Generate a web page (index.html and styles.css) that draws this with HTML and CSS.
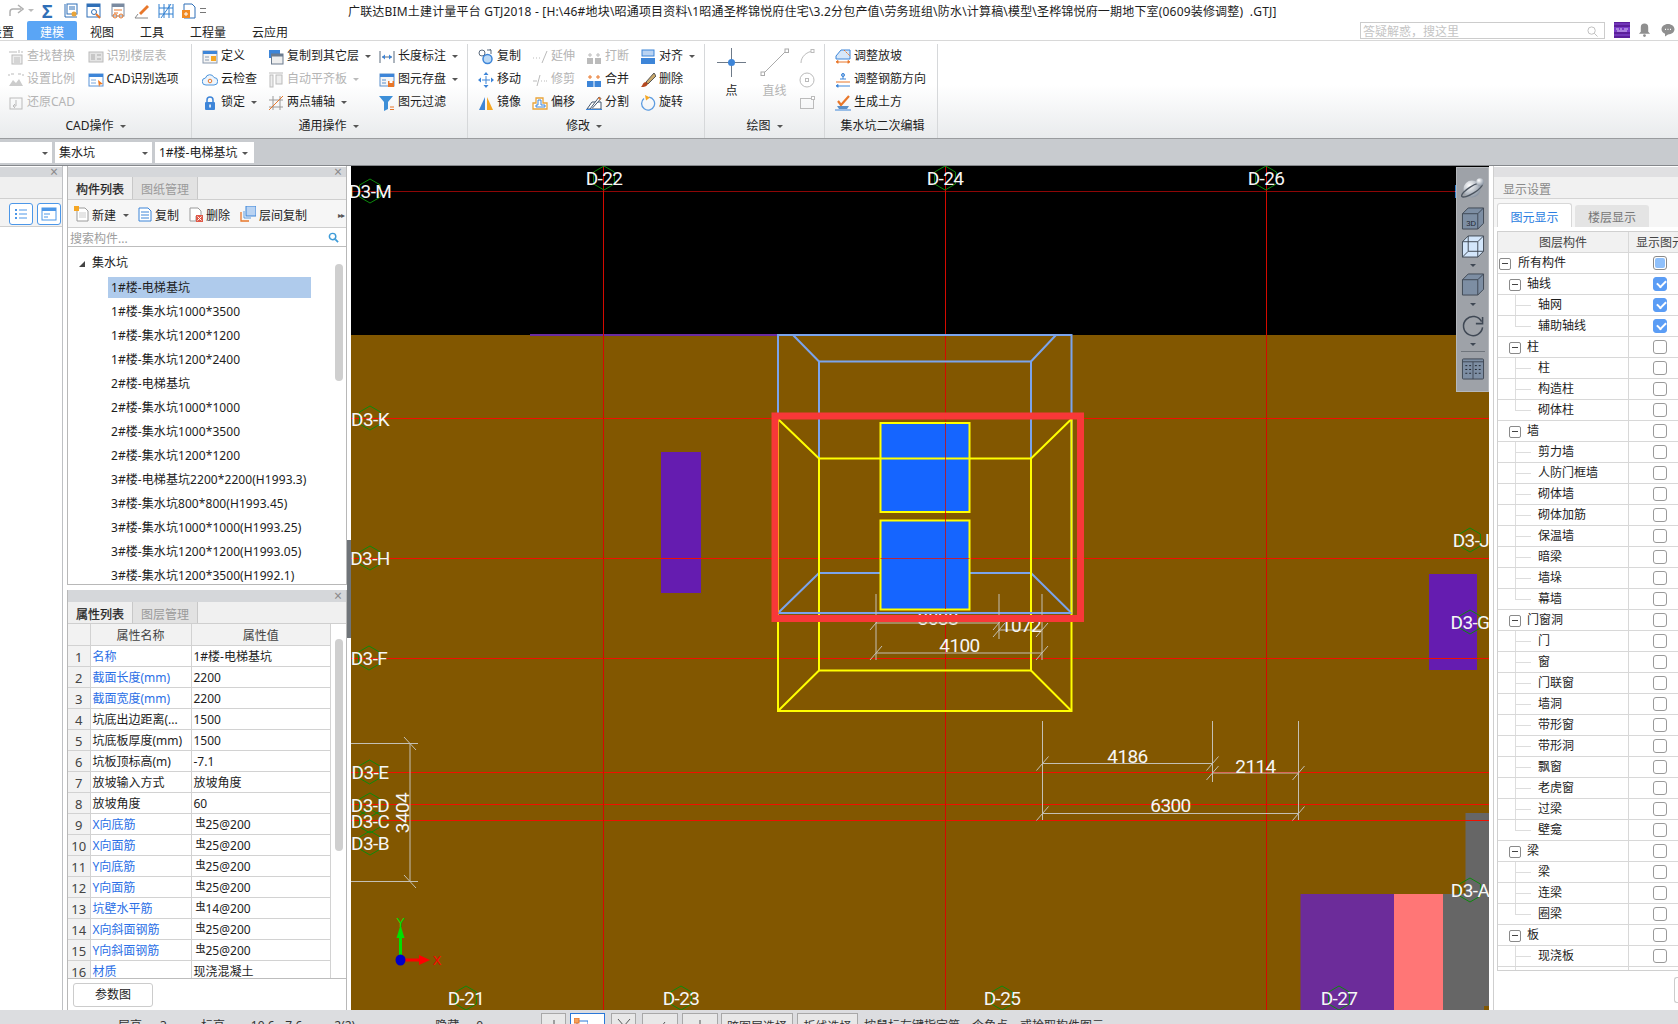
FILE: index.html
```html
<!DOCTYPE html>
<html lang="zh-CN">
<head>
<meta charset="utf-8">
<title>广联达BIM土建计量平台 GTJ2018</title>
<link rel="stylesheet" href="styles.css">
</head>
<body>
<svg class="defs" width="0" height="0">
  <defs>
    <radialGradient id="ball" cx=".35" cy=".3" r=".8"><stop offset="0" stop-color="#fff"/><stop offset="1" stop-color="#7f8b9a"/></radialGradient>
  </defs>
  <symbol id="i-find" viewBox="0 0 16 16"><path d="M1 3h8M11 1v3M13 3h2" stroke="#bbb" fill="none"/><rect x="4" y="6" width="10" height="9" fill="#eee" stroke="#bbb"/><path d="M6 9h6M6 11h6M6 13h6" stroke="#bbb"/></symbol>
  <symbol id="i-scale" viewBox="0 0 16 16"><path d="M1 2v2M15 2v2M3 2h3M10 2h3" stroke="#bbb" fill="none"/><path d="M1 14l4-6 3 3 3-4 4 7z" fill="#ccc"/></symbol>
  <symbol id="i-restore" viewBox="0 0 16 16"><rect x="2" y="3" width="12" height="11" fill="none" stroke="#bbb"/><path d="M8 5v6H5M7 9l-2 2 2 2" fill="none" stroke="#bbb"/></symbol>
  <symbol id="i-floor" viewBox="0 0 16 16"><rect x="1" y="3" width="14" height="10" fill="#e4e4e4" stroke="#bbb"/><path d="M3 6h4M3 8h4M3 10h4M9 6h4M9 10h4" stroke="#aaa"/></symbol>
  <symbol id="i-cadopt" viewBox="0 0 16 16"><rect x="1" y="2" width="14" height="12" fill="#fff" stroke="#5b94d8"/><rect x="1" y="2" width="14" height="3" fill="#3d85d8"/><path d="M10 8l5 4-3 .5-1 2.5z" fill="#f07a20"/><path d="M3 8h5M3 11h5" stroke="#7aa7dc"/></symbol>
  <symbol id="i-define" viewBox="0 0 16 16"><rect x="1" y="2" width="14" height="12" fill="#f4f4f4" stroke="#8a99ad"/><rect x="1" y="2" width="14" height="3" fill="#3d85d8"/><path d="M3 8h4M3 11h4" stroke="#8a99ad"/><rect x="9" y="7" width="5" height="5" fill="#f5a623"/></symbol>
  <symbol id="i-cloud" viewBox="0 0 16 16"><path d="M4 13a3.500 3.500 0 0 1-.5-7A4.500 4.500 0 0 1 12 5.500 3.700 3.700 0 0 1 12 13z" fill="#eef5fc" stroke="#4b94dc"/><circle cx="8" cy="9" r="1.800" fill="none" stroke="#e8772a"/></symbol>
  <symbol id="i-lock" viewBox="0 0 16 16"><path d="M5 7V5a3 3 0 0 1 6 0v2" fill="none" stroke="#3d85d8" stroke-width="1.500"/><rect x="3" y="7" width="10" height="8" rx="1" fill="#3d85d8"/><rect x="7.300" y="9.500" width="1.500" height="3" fill="#fff"/></symbol>
  <symbol id="i-copylayer" viewBox="0 0 16 16"><rect x="1" y="1" width="11" height="8" fill="#3d85d8"/><rect x="3.500" y="5" width="11.500" height="10" fill="#eee" stroke="#6b7b8e"/><rect x="3.500" y="5" width="11.500" height="2.500" fill="#6b7b8e"/></symbol>
  <symbol id="i-alignboard" viewBox="0 0 16 16"><path d="M1 1h14" stroke="#bbb"/><rect x="2" y="3" width="3" height="12" fill="#eee" stroke="#bbb"/><rect x="8" y="3" width="6" height="9" fill="#eee" stroke="#bbb"/></symbol>
  <symbol id="i-twopoint" viewBox="0 0 16 16"><path d="M5 1v14M12 1v14M1 5h14M1 12h14" stroke="#9a9a9a" fill="none"/><path d="M1 15L15 1" stroke="#e8772a"/></symbol>
  <symbol id="i-length" viewBox="0 0 16 16"><path d="M1 2v12M15 2v12M3 8h10" stroke="#5a6a7d" fill="none"/><path d="M3 8l3-2.500v5zM13 8l-3-2.500v5z" fill="#3d85d8"/></symbol>
  <symbol id="i-save" viewBox="0 0 16 16"><rect x="1" y="2" width="14" height="12" fill="#f6f6f6" stroke="#5b8fcc"/><rect x="1" y="2" width="14" height="3" fill="#3d85d8"/><path d="M3 8h4M3 11h4" stroke="#5b8fcc"/><rect x="9" y="9" width="6" height="6" fill="#e8772a"/><rect x="10.500" y="9" width="3" height="2" fill="#fff"/></symbol>
  <symbol id="i-filter" viewBox="0 0 16 16"><path d="M0 1h14L9 7v7l-4 2V7z" fill="#3d8fd8"/><path d="M11 12h4M11 14.500h4" stroke="#e8772a"/></symbol>
  <symbol id="i-copy" viewBox="0 0 16 16"><circle cx="4" cy="4" r="3" fill="#fff" stroke="#5a6a7d"/><circle cx="9.500" cy="10" r="4.500" fill="#bcd9f5" stroke="#3d85d8" stroke-width="1.500"/><path d="M9 1h4l-1.500-1M13 1v4" fill="none" stroke="#5a6a7d"/></symbol>
  <symbol id="i-move" viewBox="0 0 16 16"><path d="M8 0l2.500 3h-5zM8 16l-2.500-3h5zM0 8l3-2.500v5zM16 8l-3-2.500v5z" fill="#3d85d8"/><path d="M4 8h8M8 4v8" stroke="#3d85d8"/></symbol>
  <symbol id="i-mirror" viewBox="0 0 16 16"><path d="M7 2v13H1z" fill="#3d85d8"/><path d="M9 2v13h6z" fill="#f5a623"/></symbol>
  <symbol id="i-extend" viewBox="0 0 16 16"><path d="M1 9h1M4 9h1M7 9h1" stroke="#bbb"/><path d="M10 14l5-12" stroke="#bbb"/></symbol>
  <symbol id="i-trim" viewBox="0 0 16 16"><path d="M1 9h4M9 9h1M12 9h1M14 9h1" stroke="#bbb"/><path d="M5 14l3-11" stroke="#bbb"/></symbol>
  <symbol id="i-offset" viewBox="0 0 16 16"><path d="M1 14V8h3V3h7v5h4v6z" fill="#fff" stroke="#e8a43a" stroke-width="1.300"/><path d="M4 12V10h2V5h3v5h4v2z" fill="none" stroke="#3d85d8"/></symbol>
  <symbol id="i-break" viewBox="0 0 16 16"><rect x="1" y="9" width="6" height="6" fill="#bbb"/><rect x="9" y="9" width="6" height="6" fill="#bbb"/><path d="M2 6h4M4 4v4M10 6h4M12 4v4" stroke="#bbb"/></symbol>
  <symbol id="i-merge" viewBox="0 0 16 16"><rect x="1" y="9" width="14" height="6" fill="#3d85d8"/><path d="M8 9v6" stroke="#fff"/><path d="M2 5h4M4 3v4M10 5h4M12 3v4" stroke="#e8772a"/></symbol>
  <symbol id="i-split" viewBox="0 0 16 16"><path d="M1 14L6 7h9v7z" fill="#fff" stroke="#44566c"/><path d="M4 14L13 2l2 1.500-9 10" fill="#fff" stroke="#44566c"/><path d="M13 2l2 1.500-1 1.500-2-1.500z" fill="#e8772a"/><path d="M0 14.500h16" stroke="#3d85d8"/></symbol>
  <symbol id="i-align" viewBox="0 0 16 16"><rect x="2" y="1" width="12" height="6" fill="#b9d3f2" stroke="#3d85d8"/><rect x="1" y="9" width="14" height="6" fill="#3d85d8"/></symbol>
  <symbol id="i-delete" viewBox="0 0 16 16"><path d="M14 1L6 10l2 2 8-8z" fill="#c9a86a" stroke="#555"/><path d="M6 10c-3 0-3 3-5 5 3 0 6-.5 7-3z" fill="#b5481f"/></symbol>
  <symbol id="i-rotate" viewBox="0 0 16 16"><path d="M9 2.100A6.500 6.500 0 1 1 4 3.500" fill="none" stroke="#5b9be0" stroke-width="1.300"/><path d="M5 0l5 2.500-4 3z" fill="#f5a623"/></symbol>
  <symbol id="i-slope" viewBox="0 0 16 16"><path d="M1 7L6 1h9v9H1z" fill="#d6e7f9" stroke="#3d85d8"/><path d="M9 1l6 6" stroke="#e8772a" stroke-dasharray="2 1"/><path d="M1 13h14M1 13l2-1.500v3M15 13l-2-1.500v3" fill="#e8772a" stroke="#e8772a"/></symbol>
  <symbol id="i-rebar" viewBox="0 0 16 16"><path d="M8 1v6M5 7h6" stroke="#3d85d8"/><circle cx="8" cy="3" r="1.500" fill="none" stroke="#3d85d8"/><path d="M1 10h14" stroke="#e8772a"/><path d="M1 14h14M1 14l2-1.500v3" stroke="#3d85d8" fill="#3d85d8"/></symbol>
  <symbol id="i-earth" viewBox="0 0 16 16"><path d="M3 6l3 4 8-9" fill="none" stroke="#e8772a" stroke-width="2.200"/><path d="M2 11h12l-2 3H4z" fill="#5a8fc8"/><path d="M0 15h16" stroke="#3d85d8"/></symbol>
  <symbol id="i-new" viewBox="0 0 16 16"><path d="M3 2h8l3 3v10H3z" fill="#fff" stroke="#9a9a9a"/><path d="M5 7h7M5 9h7M5 11h7" stroke="#ccc"/><rect x="0" y="0" width="5" height="5" fill="#f5a623"/></symbol>
  <symbol id="i-dup" viewBox="0 0 16 16"><path d="M2 2h9l3 3v10H2z" fill="#fff" stroke="#3d85d8"/><path d="M4 6h8M4 9h8M4 12h8" stroke="#3d85d8"/></symbol>
  <symbol id="i-del" viewBox="0 0 16 16"><path d="M2 2h8l3 3v5H8v5H2z" fill="#fff" stroke="#9a9a9a"/><rect x="8" y="9" width="7" height="7" fill="#e05a4a"/><path d="M9.500 10.500l4 4M13.500 10.500l-4 4" stroke="#fff"/></symbol>
  <symbol id="i-floorcopy" viewBox="0 0 16 16"><path d="M1 6v9h8" fill="none" stroke="#e8772a" stroke-width="1.300"/><path d="M4 5v7h7" fill="none" stroke="#5b9be0"/><rect x="6" y="0" width="10" height="10" fill="#b9d3f2" stroke="#3d85d8"/></symbol>
</svg>

<header class="titlebar">
  <div class="quick">
    <svg class="qi redo" viewBox="0 0 16 14"><path d="M2 12V8a3 3 0 0 1 3-3h8M10 1l5 4-5 4" fill="none" stroke="#b0b0b0" stroke-width="1.500"/></svg>
    <i class="dd gray"></i>
    <span class="sigma">Σ</span>
    <svg class="qi q1" viewBox="0 0 16 16"><path d="M2 1v13h12" fill="none" stroke="#2f6fb7"/><rect x="4" y="1" width="10" height="10" fill="#fff" stroke="#2f6fb7"/><path d="M6 4h6M6 6h6" stroke="#2f6fb7"/><circle cx="11" cy="11" r="2.500" fill="#e8a43a"/></svg>
    <svg class="qi q2" viewBox="0 0 16 16"><rect x="1" y="1" width="13" height="13" fill="#fff" stroke="#2f6fb7"/><rect x="1" y="1" width="13" height="3" fill="#2f6fb7"/><circle cx="8" cy="9" r="2.500" fill="none" stroke="#2f6fb7"/><path d="M10 11l4 4" stroke="#e8772a" stroke-width="2"/></svg>
    <svg class="qi q3" viewBox="0 0 16 16"><rect x="2" y="1" width="12" height="12" fill="#fff" stroke="#7a8aa0"/><rect x="2" y="1" width="12" height="3" fill="#7a8aa0"/><path d="M4 7h8M4 10h4" stroke="#e8772a"/><circle cx="5" cy="13" r="2" fill="none" stroke="#e8772a"/><circle cx="11" cy="13" r="2" fill="none" stroke="#e8772a"/></svg>
    <svg class="qi q4" viewBox="0 0 16 16"><path d="M5 10L13 2l2 2-8 8z" fill="#e8772a"/><path d="M1 15h13M1 15l3-4" stroke="#888" fill="none"/></svg>
    <svg class="qi q5" viewBox="0 0 16 16"><path d="M1 1v14M6 1v14M11 1v14M15 1v14M1 5h14M1 11h14M3 15L13 1" stroke="#2f7fd0" fill="none"/></svg>
    <svg class="qi q6" viewBox="0 0 16 16"><path d="M3 1h8l3 3v11H3z" fill="#fff" stroke="#2f6fb7"/><rect x="1" y="7" width="8" height="8" fill="#f08a24"/><path d="M5 9v4M3 11h4" stroke="#fff"/></svg>
    <span class="qmenu"></span>
  </div>
  <div class="apptitle">广联达BIM土建计量平台 GTJ2018 - [H:\46#地块\昭通项目资料\1昭通圣桦锦悦府住宅\3.2分包产值\劳务班组\防水\计算稿\模型\圣桦锦悦府一期地下室(0609装修调整)&nbsp;&nbsp;.GTJ]</div>
</header>

<nav class="menubar">
  <span class="m m0">设置</span>
  <span class="m mactive">建模</span>
  <span class="m m1">视图</span>
  <span class="m m2">工具</span>
  <span class="m m3">工程量</span>
  <span class="m m4">云应用</span>
  <div class="searchbox">
    <span>答疑解惑，搜这里</span>
    <svg class="searchic" viewBox="0 0 12 12"><circle cx="5" cy="5" r="4" fill="none" stroke="#bbb"/><path d="M8 8l3.500 3.500" stroke="#bbb"/></svg>
  </div>
  <svg class="avatar" viewBox="0 0 16 16"><rect width="16" height="16" fill="#5b1f9a"/><rect y="5" width="16" height="5" fill="#7a3cc8"/><path d="M2 7h3M6 7h2M10 7h4M3 9h10" stroke="#d9c6f2"/><path d="M0 2h16M0 13h16" stroke="#8a4fd8"/></svg>
  <svg class="bell" viewBox="0 0 14 16"><path d="M7 1a4 4 0 0 1 4 4v5l2 2H1l2-2V5a4 4 0 0 1 4-4z" fill="#8f8f8f"/><circle cx="7" cy="14" r="1.500" fill="#8f8f8f"/></svg>
  <svg class="chat" viewBox="0 0 14 14"><path d="M7 1c3.500 0 6.500 2.300 6.500 5.300S10.500 11.500 7 11.500L4 13.500v-2.700C2 10 .5 8.300.5 6.300.5 3.300 3.500 1 7 1z" fill="#8f8f8f"/><path d="M4 6.300h1M6.500 6.300h1M9 6.300h1" stroke="#fff" stroke-width="1.300"/></svg>
</nav>

<section class="ribbon">
  <div class="group g-cad">
    <div class="cols">
      <div class="col cad1">
        <div class="cmd off"><svg class="ic"><use href="#i-find"/></svg>查找替换</div>
        <div class="cmd off"><svg class="ic"><use href="#i-scale"/></svg>设置比例</div>
        <div class="cmd off"><svg class="ic"><use href="#i-restore"/></svg>还原CAD</div>
      </div>
      <div class="col">
        <div class="cmd off"><svg class="ic"><use href="#i-floor"/></svg>识别楼层表</div>
        <div class="cmd"><svg class="ic"><use href="#i-cadopt"/></svg>CAD识别选项</div>
      </div>
    </div>
    <div class="glabel">CAD操作<i class="dd"></i></div>
  </div>
  <div class="group g-gen">
    <div class="cols">
      <div class="col gen1">
        <div class="cmd"><svg class="ic"><use href="#i-define"/></svg>定义</div>
        <div class="cmd"><svg class="ic"><use href="#i-cloud"/></svg>云检查</div>
        <div class="cmd"><svg class="ic"><use href="#i-lock"/></svg>锁定<i class="dd"></i></div>
      </div>
      <div class="col gen2">
        <div class="cmd"><svg class="ic"><use href="#i-copylayer"/></svg>复制到其它层<i class="dd"></i></div>
        <div class="cmd off"><svg class="ic"><use href="#i-alignboard"/></svg>自动平齐板<i class="dd gray"></i></div>
        <div class="cmd"><svg class="ic"><use href="#i-twopoint"/></svg>两点辅轴<i class="dd"></i></div>
      </div>
      <div class="col">
        <div class="cmd"><svg class="ic"><use href="#i-length"/></svg>长度标注<i class="dd"></i></div>
        <div class="cmd"><svg class="ic"><use href="#i-save"/></svg>图元存盘<i class="dd"></i></div>
        <div class="cmd"><svg class="ic"><use href="#i-filter"/></svg>图元过滤</div>
      </div>
    </div>
    <div class="glabel">通用操作<i class="dd"></i></div>
  </div>
  <div class="group g-mod">
    <div class="cols">
      <div class="col mod1">
        <div class="cmd"><svg class="ic"><use href="#i-copy"/></svg>复制</div>
        <div class="cmd"><svg class="ic"><use href="#i-move"/></svg>移动</div>
        <div class="cmd"><svg class="ic"><use href="#i-mirror"/></svg>镜像</div>
      </div>
      <div class="col mod1">
        <div class="cmd off"><svg class="ic"><use href="#i-extend"/></svg>延伸</div>
        <div class="cmd off"><svg class="ic"><use href="#i-trim"/></svg>修剪</div>
        <div class="cmd"><svg class="ic"><use href="#i-offset"/></svg>偏移</div>
      </div>
      <div class="col mod1">
        <div class="cmd off"><svg class="ic"><use href="#i-break"/></svg>打断</div>
        <div class="cmd"><svg class="ic"><use href="#i-merge"/></svg>合并</div>
        <div class="cmd"><svg class="ic"><use href="#i-split"/></svg>分割</div>
      </div>
      <div class="col">
        <div class="cmd"><svg class="ic"><use href="#i-align"/></svg>对齐<i class="dd"></i></div>
        <div class="cmd"><svg class="ic"><use href="#i-delete"/></svg>删除</div>
        <div class="cmd"><svg class="ic"><use href="#i-rotate"/></svg>旋转</div>
      </div>
    </div>
    <div class="glabel">修改<i class="dd"></i></div>
  </div>
  <div class="group g-draw">
    <div class="cols">
      <div class="big bigp">
        <svg class="bigic" viewBox="0 0 29 29"><path d="M14.500 0v29M0 14.500h29" stroke="#6e7a88"/><circle cx="14.500" cy="14.500" r="3.500" fill="#3d85d8"/></svg>
        <span>点</span>
      </div>
      <div class="big bigl off">
        <svg class="bigic" viewBox="0 0 29 29"><path d="M3 26L26 3" stroke="#aaa"/><rect x="1" y="24" width="3.500" height="3.500" fill="#fff" stroke="#aaa"/><rect x="25" y="1" width="3.500" height="3.500" fill="#fff" stroke="#aaa"/></svg>
        <span>直线</span>
      </div>
      <div class="col smallcol">
        <div class="cmd"><svg class="ic"><path d="M2 14C2 8 7 3 14 2" fill="none" stroke="#bbb"/><rect x="12" y="0.500" width="3" height="3" fill="#fff" stroke="#bbb"/></svg></div>
        <div class="cmd"><svg class="ic"><circle cx="8" cy="8" r="7" fill="none" stroke="#bbb"/><rect x="6.500" y="6.500" width="3" height="3" fill="#fff" stroke="#bbb"/></svg></div>
        <div class="cmd"><svg class="ic"><rect x="1.500" y="3.500" width="13" height="10" fill="none" stroke="#bbb"/><rect x="12.500" y="1.500" width="3" height="3" fill="#fff" stroke="#bbb"/></svg></div>
      </div>
    </div>
    <div class="glabel">绘图<i class="dd"></i></div>
  </div>
  <div class="group g-pit">
    <div class="cols">
      <div class="col">
        <div class="cmd"><svg class="ic"><use href="#i-slope"/></svg>调整放坡</div>
        <div class="cmd"><svg class="ic"><use href="#i-rebar"/></svg>调整钢筋方向</div>
        <div class="cmd"><svg class="ic"><use href="#i-earth"/></svg>生成土方</div>
      </div>
    </div>
    <div class="glabel">集水坑二次编辑</div>
  </div>
</section>

<div class="filterbar">
  <div class="combo c1"><i class="dd"></i></div>
  <div class="combo c2">集水坑<i class="dd"></i></div>
  <div class="combo c3">1#楼-电梯基坑<i class="dd"></i></div>
</div>

<main class="main">
  <aside class="nav">
    <div class="phead"><span class="close">×</span></div>
    <div class="navrow"></div>
    <div class="navbtns">
      <button class="vbtn"><svg viewBox="0 0 16 16"><path d="M2 3h2v2H2zM2 7h2v2H2zM2 11h2v2H2z" fill="#4c97e8"/><path d="M6 4h8M6 8h8M6 12h8" stroke="#4c97e8"/></svg></button>
      <button class="vbtn"><svg viewBox="0 0 16 16"><rect x="1" y="2" width="14" height="12" fill="none" stroke="#4c97e8"/><rect x="1" y="2" width="14" height="3" fill="#4c97e8"/><path d="M3 8h6M3 11h4" stroke="#4c97e8"/></svg></button>
    </div>
  </aside>

  <div class="leftcol">
    <section class="panel comp">
      <div class="phead"><span class="close">×</span></div>
      <div class="tabs"><span class="tab on">构件列表</span><span class="tab">图纸管理</span></div>
      <div class="ctools">
        <span class="ct t1"><svg class="ic"><use href="#i-new"/></svg>新建<i class="dd"></i></span>
        <span class="ct t2"><svg class="ic"><use href="#i-dup"/></svg>复制</span>
        <span class="ct t3"><svg class="ic"><use href="#i-del"/></svg>删除</span>
        <span class="ct t4"><svg class="ic"><use href="#i-floorcopy"/></svg>层间复制</span>
        <span class="more">▸▸</span>
      </div>
      <div class="csearch">
        <span>搜索构件...</span>
        <svg class="csic" viewBox="0 0 12 12"><circle cx="5" cy="5" r="3.500" fill="none" stroke="#3d9bd8" stroke-width="1.600"/><path d="M8 8l3 3" stroke="#3d9bd8" stroke-width="1.800"/></svg>
      </div>
      <div class="tree">
        <div class="troot"><i class="tri"></i>集水坑</div>
        <div class="ti"><span class="sel">1#楼-电梯基坑</span></div>
        <div class="ti"><span>1#楼-集水坑1000*3500</span></div>
        <div class="ti"><span>1#楼-集水坑1200*1200</span></div>
        <div class="ti"><span>1#楼-集水坑1200*2400</span></div>
        <div class="ti"><span>2#楼-电梯基坑</span></div>
        <div class="ti"><span>2#楼-集水坑1000*1000</span></div>
        <div class="ti"><span>2#楼-集水坑1000*3500</span></div>
        <div class="ti"><span>2#楼-集水坑1200*1200</span></div>
        <div class="ti"><span>3#楼-电梯基坑2200*2200(H1993.3)</span></div>
        <div class="ti"><span>3#楼-集水坑800*800(H1993.45)</span></div>
        <div class="ti"><span>3#楼-集水坑1000*1000(H1993.25)</span></div>
        <div class="ti"><span>3#楼-集水坑1200*1200(H1993.05)</span></div>
        <div class="ti"><span>3#楼-集水坑1200*3500(H1992.1)</span></div>
        <div class="thumb thumb1"></div>
      </div>
    </section>
    <section class="panel prop">
      <div class="phead"><span class="close">×</span></div>
      <div class="tabs"><span class="tab on">属性列表</span><span class="tab">图层管理</span></div>
      <div class="ptable">
        <table>
          <colgroup><col class="cn"><col class="ck"><col class="cv"></colgroup>
          <thead><tr><th></th><th>属性名称</th><th>属性值</th></tr></thead>
          <tbody>
            <tr><th>1</th><td class="lk">名称</td><td>1#楼-电梯基坑</td></tr>
            <tr><th>2</th><td class="lk">截面长度(mm)</td><td>2200</td></tr>
            <tr><th>3</th><td class="lk">截面宽度(mm)</td><td>2200</td></tr>
            <tr><th>4</th><td>坑底出边距离(...</td><td>1500</td></tr>
            <tr><th>5</th><td>坑底板厚度(mm)</td><td>1500</td></tr>
            <tr><th>6</th><td>坑板顶标高(m)</td><td>-7.1</td></tr>
            <tr><th>7</th><td>放坡输入方式</td><td>放坡角度</td></tr>
            <tr><th>8</th><td>放坡角度</td><td>60</td></tr>
            <tr><th>9</th><td class="lk">X向底筋</td><td><b class="rb">虫</b>25@200</td></tr>
            <tr><th>10</th><td class="lk">X向面筋</td><td><b class="rb">虫</b>25@200</td></tr>
            <tr><th>11</th><td class="lk">Y向底筋</td><td><b class="rb">虫</b>25@200</td></tr>
            <tr><th>12</th><td class="lk">Y向面筋</td><td><b class="rb">虫</b>25@200</td></tr>
            <tr><th>13</th><td class="lk">坑壁水平筋</td><td><b class="rb">虫</b>14@200</td></tr>
            <tr><th>14</th><td class="lk">X向斜面钢筋</td><td><b class="rb">虫</b>25@200</td></tr>
            <tr><th>15</th><td class="lk">Y向斜面钢筋</td><td><b class="rb">虫</b>25@200</td></tr>
            <tr><th>16</th><td class="lk">材质</td><td>现浇混凝土</td></tr>
          </tbody>
        </table>
        <div class="thumb thumb2"></div>
      </div>
      <div class="pfoot"><button class="parambtn">参数图</button></div>
    </section>
  </div>

  <div class="split"><div class="grip"></div></div>

  <div class="canvas">
    <svg class="draw" viewBox="351 166 1138 844" width="1138" height="844">
      <defs>
        <polygon id="hex" points="0,-12 10.400,-6 10.400,6 0,12 -10.400,6 -10.400,-6" fill="none" stroke="#0c8a0c"/>
        <path id="tick" d="M-6 7L6 -7" stroke="#c4c0b4" fill="none"/>
      </defs>
      <rect x="351" y="166" width="1138" height="844" fill="#000"/>
      <rect x="351" y="335" width="1138" height="675" fill="#825700"/>
      <path d="M530 335H778" stroke="#6a2ba0" stroke-width="2"/>
      <rect x="661" y="452" width="40" height="141" fill="#651cb0"/>
      <rect x="1429" y="574" width="48" height="96" fill="#651cb0"/>
      <rect x="1465.500" y="813" width="24" height="81" fill="#666"/>
      <rect x="1300.500" y="894" width="94" height="116" fill="#6c2c9a"/>
      <rect x="1394" y="894" width="49" height="116" fill="#ff7676"/>
      <rect x="1443" y="894" width="46" height="116" fill="#666"/>
      <rect x="1484" y="1006" width="5" height="4" fill="#825700"/>
      <g class="grid-h">
        <path d="M351 191.500H1489" stroke="#8e0606"/>
        <path d="M351 418.500H1489M351 558.500H1489M351 658.500H1489M351 772.500H1489M351 804.500H1489M351 820.500H1489" stroke="#f01000"/>
      </g>
      <path d="M603.500 166V1010M945.500 166V1010M1266.500 166V1010" stroke="#d40a00"/>
      <g class="lbl">
        <text x="938" y="618">3038</text>
      </g>
      <g class="pit">
        <g stroke="#7ba4ec" stroke-width="2" fill="none">
          <path d="M778 335H1071.500V613H778Z"/>
          <path d="M819 573V361.500H1031V573"/>
          <path d="M793 335L819 361.500M1056 335L1031 361.500M778 613L819 573H1031L1071.500 613"/>
        </g>
        <g stroke="#ffff00" stroke-width="2" fill="none">
          <path d="M778 419V711H1071.500V419"/>
          <path d="M819 458.500H1031V670.500H819Z"/>
          <path d="M778 419L819 458.500M1071.500 419L1031 458.500M778 711L819 670.500M1071.500 711L1031 670.500"/>
        </g>
        <rect x="880.500" y="423" width="89" height="89" fill="#1565ff" stroke="#ffff00" stroke-width="2"/>
        <path d="M880.500 458.500H969.500" stroke="#ffff00" stroke-width="2"/>
        <rect x="880.500" y="520.500" width="89" height="89" fill="#1565ff" stroke="#ffff00" stroke-width="2"/>
        <path d="M945.500 423V609" stroke="#d40a00" opacity=".75"/>
        <path d="M880.500 558.500H969.500" stroke="#f01000" opacity=".75"/>
        <path d="M778 613H1071.500" stroke="#7ba4ec" stroke-width="2"/>
      </g>
      <g class="dim" stroke="#c4c0b4" fill="none">
        <path d="M876 594V660M999 594V639M1042 594V660M876 623H999M999 630H1042M876 653H1042"/>
        <path d="M1042.500 721V820M1212.500 721V782M1298.500 721V820M1042.500 763.500H1212.500M1212.500 773H1298.500M1042.500 813.500H1298.500"/>
        <path d="M351 743.500H418M351 881.500H418M410 743V882"/>
      </g>
      <use href="#tick" x="876" y="623"/><use href="#tick" x="999" y="623"/><use href="#tick" x="999" y="630"/><use href="#tick" x="1042" y="630"/><use href="#tick" x="876" y="653"/><use href="#tick" x="1042" y="653"/>
      <use href="#tick" x="1042.500" y="763.500"/><use href="#tick" x="1212.500" y="763.500"/><use href="#tick" x="1212.500" y="773"/><use href="#tick" x="1298.500" y="773"/><use href="#tick" x="1042.500" y="813.500"/><use href="#tick" x="1298.500" y="813.500"/>
      <path d="M404 737L416 750M404 875L416 888" stroke="#c4c0b4"/>
      <g class="lbl">
        <text x="1021" y="625">1072</text>
        <text x="959.500" y="645">4100</text>
        <text x="1127.500" y="756">4186</text>
        <text x="1255.500" y="766">2114</text>
        <text x="1170.500" y="805">6300</text>
        <text x="402.500" y="813" transform="rotate(-90 402.500 813)">3404</text>
      </g>
      <g class="hexes">
        <use href="#hex" x="604" y="178"/><use href="#hex" x="945" y="178"/><use href="#hex" x="1266" y="178"/>
        <use href="#hex" x="466" y="998"/><use href="#hex" x="681" y="998"/><use href="#hex" x="1002" y="998"/><use href="#hex" x="1339" y="998"/>
        <use href="#hex" x="370" y="191"/><use href="#hex" x="370" y="418"/><use href="#hex" x="370" y="558"/><use href="#hex" x="369" y="658"/>
        <use href="#hex" x="369.500" y="772"/><use href="#hex" x="370" y="805"/><use href="#hex" x="370" y="821"/><use href="#hex" x="370" y="843"/>
        <use href="#hex" x="1470" y="540"/><use href="#hex" x="1470" y="622"/><use href="#hex" x="1470" y="890"/>
      </g>
      <g class="lbl">
        <text x="604" y="178">D-22</text><text x="945" y="178">D-24</text><text x="1266" y="178">D-26</text>
        <text x="466" y="998">D-21</text><text x="681" y="998">D-23</text><text x="1002" y="998">D-25</text><text x="1339" y="998">D-27</text>
        <text x="370" y="191">D3-M</text><text x="370" y="419">D3-K</text><text x="370" y="558">D3-H</text><text x="369" y="658">D3-F</text>
        <text x="370" y="772">D3-E</text><text x="370" y="805">D3-D</text><text x="370" y="821">D3-C</text><text x="370" y="843">D3-B</text>
        <text x="1471" y="540">D3-J</text><text x="1470" y="622">D3-G</text><text x="1470" y="890">D3-A</text>
        <text x="1472" y="191">D3-L</text><text x="1474" y="296">D3-I</text>
      </g>
      <rect x="775" y="416" width="305.500" height="202.500" fill="none" stroke="#f83838" stroke-width="7"/>
      <g class="axis">
        <path d="M400.500 960V936" stroke="#00e000" stroke-width="3"/>
        <path d="M400.500 925l-4 13h8z" fill="#00e000"/>
        <path d="M401 960H422" stroke="#f00" stroke-width="3"/>
        <path d="M430 960l-11-5v10z" fill="#f00"/>
        <ellipse cx="400.500" cy="960" rx="5" ry="5.500" fill="#0000c8"/>
        <text class="axy" x="400.500" y="922">Y</text>
        <text class="axx" x="437" y="960">X</text>
      </g>
    </svg>
    <div class="viewtools">
      <svg class="vt vplanet" viewBox="0 0 24 22"><circle cx="11" cy="12" r="8.500" fill="url(#ball)"/><ellipse cx="11" cy="13" rx="12" ry="3.500" fill="none" stroke="#4c5560" stroke-width="1.400" transform="rotate(-32 11 13)"/><circle cx="19" cy="5" r="3.800" fill="url(#ball)"/></svg>
      <svg class="vt v3d" viewBox="0 0 24 24"><path d="M1 7L7 1h16v16l-6 6H1z" fill="#7d8ea3" stroke="#3f4854"/><path d="M1 7h16v16M17 7l6-6" fill="none" stroke="#3f4854"/><text class="t3d" x="5" y="20">3D</text></svg>
      <svg class="vt vwire" viewBox="0 0 24 24"><path d="M1 7L7 1h16v16l-6 6H1z" fill="#d3e6fb" stroke="#3f4854"/><path d="M7 1v16h16M7 17l-6 6M1 7h16v16M17 7l6-6" fill="none" stroke="#3f4854"/></svg>
      <i class="dd dark d1"></i>
      <svg class="vt vsolid" viewBox="0 0 24 24"><path d="M1 7L7 1h16v16l-6 6H1z" fill="#7d8ea3" stroke="#3f4854"/><path d="M1 7h16v16M17 7l6-6" fill="none" stroke="#3f4854"/></svg>
      <i class="dd dark d2"></i>
      <svg class="vt vrot" viewBox="0 0 24 24"><path d="M21 7A10 10 0 1 0 22 13" fill="none" stroke="#3f4854" stroke-width="1.600"/><path d="M22 2v7h-7" fill="none" stroke="#3f4854" stroke-width="1.600"/></svg>
      <i class="dd dark d3"></i>
      <span class="vsep"></span>
      <svg class="vt vgrid" viewBox="0 0 24 24"><rect x="1" y="2" width="22" height="21" rx="1" fill="#7d8ea3" stroke="#3f4854"/><path d="M1 5h22M12 5v18" stroke="#3f4854"/><path d="M4 9h2M8 9h2M4 13h2M8 13h2M4 17h2M8 17h2M14 9h2M18 9h2M14 13h2M18 13h2M14 17h2M18 17h2" stroke="#20262e"/></svg>
    </div>
  </div>

  <aside class="right">
    <div class="phead"></div>
    <div class="rtitle">显示设置</div>
    <div class="rtabs"><span class="rtab on">图元显示</span><span class="rtab">楼层显示</span></div>
    <div class="ltable">
      <div class="lrow lhead"><span class="lname">图层构件</span><span class="lcheck">显示图元</span></div>
      <div class="lrow"><span class="lname l0"><i class="exp"></i>所有构件</span><span class="lcheck"><i class="cb part"></i></span></div>
      <div class="lrow"><span class="lname l1"><i class="exp"></i>轴线</span><span class="lcheck"><i class="cb on"></i></span></div>
      <div class="lrow"><span class="lname l2"><i class="br"></i>轴网</span><span class="lcheck"><i class="cb on"></i></span></div>
      <div class="lrow"><span class="lname l2"><i class="br last"></i>辅助轴线</span><span class="lcheck"><i class="cb on"></i></span></div>
      <div class="lrow"><span class="lname l1"><i class="exp"></i>柱</span><span class="lcheck"><i class="cb"></i></span></div>
      <div class="lrow"><span class="lname l2"><i class="br"></i>柱</span><span class="lcheck"><i class="cb"></i></span></div>
      <div class="lrow"><span class="lname l2"><i class="br"></i>构造柱</span><span class="lcheck"><i class="cb"></i></span></div>
      <div class="lrow"><span class="lname l2"><i class="br last"></i>砌体柱</span><span class="lcheck"><i class="cb"></i></span></div>
      <div class="lrow"><span class="lname l1"><i class="exp"></i>墙</span><span class="lcheck"><i class="cb"></i></span></div>
      <div class="lrow"><span class="lname l2"><i class="br"></i>剪力墙</span><span class="lcheck"><i class="cb"></i></span></div>
      <div class="lrow"><span class="lname l2"><i class="br"></i>人防门框墙</span><span class="lcheck"><i class="cb"></i></span></div>
      <div class="lrow"><span class="lname l2"><i class="br"></i>砌体墙</span><span class="lcheck"><i class="cb"></i></span></div>
      <div class="lrow"><span class="lname l2"><i class="br"></i>砌体加筋</span><span class="lcheck"><i class="cb"></i></span></div>
      <div class="lrow"><span class="lname l2"><i class="br"></i>保温墙</span><span class="lcheck"><i class="cb"></i></span></div>
      <div class="lrow"><span class="lname l2"><i class="br"></i>暗梁</span><span class="lcheck"><i class="cb"></i></span></div>
      <div class="lrow"><span class="lname l2"><i class="br"></i>墙垛</span><span class="lcheck"><i class="cb"></i></span></div>
      <div class="lrow"><span class="lname l2"><i class="br last"></i>幕墙</span><span class="lcheck"><i class="cb"></i></span></div>
      <div class="lrow"><span class="lname l1"><i class="exp"></i>门窗洞</span><span class="lcheck"><i class="cb"></i></span></div>
      <div class="lrow"><span class="lname l2"><i class="br"></i>门</span><span class="lcheck"><i class="cb"></i></span></div>
      <div class="lrow"><span class="lname l2"><i class="br"></i>窗</span><span class="lcheck"><i class="cb"></i></span></div>
      <div class="lrow"><span class="lname l2"><i class="br"></i>门联窗</span><span class="lcheck"><i class="cb"></i></span></div>
      <div class="lrow"><span class="lname l2"><i class="br"></i>墙洞</span><span class="lcheck"><i class="cb"></i></span></div>
      <div class="lrow"><span class="lname l2"><i class="br"></i>带形窗</span><span class="lcheck"><i class="cb"></i></span></div>
      <div class="lrow"><span class="lname l2"><i class="br"></i>带形洞</span><span class="lcheck"><i class="cb"></i></span></div>
      <div class="lrow"><span class="lname l2"><i class="br"></i>飘窗</span><span class="lcheck"><i class="cb"></i></span></div>
      <div class="lrow"><span class="lname l2"><i class="br"></i>老虎窗</span><span class="lcheck"><i class="cb"></i></span></div>
      <div class="lrow"><span class="lname l2"><i class="br"></i>过梁</span><span class="lcheck"><i class="cb"></i></span></div>
      <div class="lrow"><span class="lname l2"><i class="br last"></i>壁龛</span><span class="lcheck"><i class="cb"></i></span></div>
      <div class="lrow"><span class="lname l1"><i class="exp"></i>梁</span><span class="lcheck"><i class="cb"></i></span></div>
      <div class="lrow"><span class="lname l2"><i class="br"></i>梁</span><span class="lcheck"><i class="cb"></i></span></div>
      <div class="lrow"><span class="lname l2"><i class="br"></i>连梁</span><span class="lcheck"><i class="cb"></i></span></div>
      <div class="lrow"><span class="lname l2"><i class="br last"></i>圈梁</span><span class="lcheck"><i class="cb"></i></span></div>
      <div class="lrow"><span class="lname l1"><i class="exp"></i>板</span><span class="lcheck"><i class="cb"></i></span></div>
      <div class="lrow"><span class="lname l2"><i class="br"></i>现浇板</span><span class="lcheck"><i class="cb"></i></span></div>
      <div class="lrow"><span class="lname l2"><i class="br"></i></span><span class="lcheck"><i class="cb"></i></span></div>
    </div>
    <div class="rfoot"><button class="rbtn"></button></div>
  </aside>
</main>

<footer class="status">
  <span class="s s1">层高</span><span class="s s2">3</span><span class="s s3">标高</span><span class="s s4">-10.6~-7.6</span><span class="s s5">2(2)</span><span class="s s6">隐藏</span><span class="s s7">0</span>
  <span class="sb b1"><svg viewBox="0 0 14 14"><path d="M7 2v12M2 12h10" stroke="#555" fill="none"/></svg></span>
  <span class="sb b2 act"><svg viewBox="0 0 14 14"><rect x="3" y="3" width="11" height="11" fill="#fff" stroke="#2a78d8"/><rect x="0" y="0" width="5" height="5" fill="#f5a25d" stroke="#e8772a"/></svg></span>
  <span class="sb b3"><svg viewBox="0 0 14 14"><path d="M1 1l6 7 6-7M7 8v6" stroke="#555" fill="none"/></svg></span>
  <span class="sb b4"><svg viewBox="0 0 14 14"><path d="M2 10l3 3 7-9" stroke="#555" fill="none"/></svg></span>
  <span class="sb b5"><svg viewBox="0 0 14 14"><path d="M7 2v12M1 8h12" stroke="#555" fill="none"/></svg></span>
  <span class="sb b6">跨图层选择</span>
  <span class="sb b7">折线选择</span>
  <span class="s s8">按鼠标左键指定第一个角点，或拾取构件图元</span>
</footer>
</body>
</html>
```
FILE: styles.css
```css
* { box-sizing: border-box; }
html, body { margin: 0; padding: 0; }
body {
  width: 1678px;
  height: 1024px;
  overflow: hidden;
  background: #fff;
  color: #1d1d1d;
  font: 12px/1.2 "Noto Sans", "Noto Sans CJK SC", sans-serif;
}
i, b { font-style: normal; font-weight: normal; }
button { font: inherit; padding: 0; }
.defs { position: absolute; }

/* dropdown caret */
.dd {
  display: inline-block;
  width: 0;
  height: 0;
  margin-left: 6px;
  border-style: solid;
  border-width: 3px 3px 0;
  border-color: #555 transparent transparent;
  vertical-align: middle;
}
.dd.gray { border-top-color: #bbb; }
.dd.dark { border-top-color: #3f4854; margin-left: 0; flex: none; }

/* title bar */
.titlebar { display: flex; align-items: center; height: 21px; }
.quick { display: flex; align-items: center; width: 348px; height: 21px; flex: none; }
.qi { width: 16px; height: 16px; flex: none; }
.redo { margin-left: 8px; }
.quick .dd { margin-left: 4px; }
.sigma { margin-left: 8px; width: 11px; color: #2f6fb7; font-size: 18px; font-weight: 700; line-height: 18px; }
.q1 { margin-left: 10px; }
.q2, .q3, .q4, .q5 { margin-left: 8px; }
.q2 { margin-left: 7px; }
.q6 { margin-left: 7px; }
.qmenu { margin-left: 3px; width: 6px; height: 5px; border-top: 1px solid #777; border-bottom: 1px solid #777; }
.apptitle { padding-top: 1px; white-space: nowrap; line-height: 21px; letter-spacing: .18px; }

/* menu bar */
.menubar {
  display: flex;
  align-items: flex-end;
  height: 20px;
  border-bottom: 1px solid #d8d8d8;
}
.m { height: 19px; line-height: 23px; white-space: nowrap; color: #222; }
.m0 { margin-left: -10px; }
.mactive { margin-left: 13px; width: 50px; text-align: center; color: #fff; background: #5aa5f5; border-radius: 2px 2px 0 0; }
.m1 { margin-left: 13px; }
.m2 { margin-left: 26px; }
.m3 { margin-left: 26px; }
.m4 { margin-left: 26px; }
.searchbox {
  display: flex;
  align-items: center;
  justify-content: space-between;
  width: 245px;
  height: 17px;
  margin: 0 0 1px 1072px;
  padding: 1px 6px 0 2px;
  border: 1px solid #ccc;
  color: #c4c4c4;
  line-height: 15px;
}
.searchic { width: 11px; height: 11px; }
.avatar { width: 16px; height: 16px; margin: 0 0 2px 9px; flex: none; }
.bell { width: 13px; height: 16px; margin: 0 0 2px 8px; }
.chat { width: 14px; height: 14px; margin: 0 0 3px 10px; }

/* ribbon */
.ribbon {
  display: flex;
  height: 98px;
  border-bottom: 1px solid #9a9c9f;
  background: linear-gradient(#fff 45%, #e9ebed);
}
.group { display: flex; flex-direction: column; flex: none; margin-top: 3px; padding-top: 1px; border-right: 1px solid #d6d8da; }
.cols { display: flex; height: 69px; }
.col { display: flex; flex-direction: column; flex: none; }
.cmd { display: flex; align-items: center; gap: 3px; height: 23px; flex: none; white-space: nowrap; }
.cmd .dd { margin-left: 3px; }
.off { color: #b4b4b4; }
.ic { width: 16px; height: 16px; flex: none; }
.glabel { height: 22px; line-height: 24px; text-align: center; white-space: nowrap; }
.g-cad { width: 192px; padding-left: 8px; }
.g-cad .glabel { padding-right: 8px; }
.cad1 { width: 79.500px; }
.g-gen { width: 276px; padding-left: 10px; }
.gen1 { width: 66px; }
.gen2 { width: 111px; }
.g-gen .glabel { margin-left: -12px; }
.g-mod { width: 237px; padding-left: 10px; }
.mod1 { width: 54px; }
.g-mod .glabel { margin-left: -14px; }
.g-draw { width: 120px; padding-left: 12px; }
.g-draw .glabel { margin-left: -12px; }
.big { display: flex; flex-direction: column; align-items: center; gap: 7px; flex: none; margin-top: 3px; }
.bigic { width: 29px; height: 29px; flex: none; }
.bigp { width: 29px; margin-right: 14px; }
.bigl { width: 29px; margin-right: 10px; }
.g-pit { width: 113px; padding-left: 10px; }
.g-pit .glabel { margin-left: -7px; }

/* filter bar */
.filterbar {
  display: flex;
  gap: 3px;
  height: 27px;
  padding-top: 3px;
  background: #c8cbcf;
  border-bottom: 1px solid #85888c;
}
.combo {
  display: flex;
  align-items: center;
  justify-content: space-between;
  height: 21px;
  padding: 2px 4px 0;
  background: #fff;
  white-space: nowrap;
}
.combo .dd { margin-left: auto; }
.c1 { width: 52px; }
.c2 { width: 97px; }
.c3 { width: 99px; padding-right: 6px; }

/* main */
.main { display: flex; height: 844px; }
.phead {
  display: flex;
  align-items: center;
  justify-content: flex-end;
  height: 10px;
  margin-top: 1px;
  background: #d5d7da;
  flex: none;
}
.close { padding-right: 4px; color: #8a8a8a; font-size: 14px; line-height: 10px; }
.nav { width: 63px; flex: none; border-right: 1px solid #bfc1c4; }
.navrow { height: 22px; background: #f0f0f0; border-bottom: 1px solid #d0d0d0; }
.navbtns { display: flex; gap: 4px; justify-content: flex-end; height: 28px; padding: 4px 1px 0 0; border-bottom: 1px solid #cfcfcf; background: #f3f3f3; }
.vbtn { display: flex; align-items: center; justify-content: center; width: 24px; height: 22px; border: 1px solid #4c97e8; border-radius: 3px; background: #fff; }
.vbtn svg { width: 16px; height: 16px; }

.leftcol { display: flex; flex-direction: column; gap: 5px; width: 280px; margin-left: 4px; flex: none; }
.panel { display: flex; flex-direction: column; border-left: 1px solid #b8b8b8; border-right: 1px solid #b8b8b8; }
.comp { height: 419px; border-bottom: 1px solid #b8b8b8; }
.prop { height: 420px; }
.prop .phead { height: 12px; margin-top: 0; }
.tabs { display: flex; height: 23px; background: #f0f0f0; border-bottom: 1px solid #cfcfcf; flex: none; }
.prop .tabs { height: 22px; }
.tab { width: 65px; padding-top: 3px; line-height: 20px; text-align: center; color: #9a9a9a; background: #e2e2e2; border-right: 1px solid #c8c8c8; }
.tab.on { color: #222; background: #efefef; -webkit-text-stroke: .25px #222; }
.ctools { display: flex; align-items: center; height: 28px; padding-top: 2px; background: #f6f6f6; border-bottom: 1px solid #cfcfcf; flex: none; white-space: nowrap; }
.ct { display: flex; align-items: center; gap: 2px; flex: none; padding-top: 3px; }
.ct .ic { margin-top: -3px; }
.ct .dd { margin-left: 5px; }
.t1 { width: 63px; margin-left: 6px; }
.t2 { width: 51px; }
.t3 { width: 52px; }
.t4 { width: 98px; gap: 3px; }
.more { color: #555; font-size: 8px; letter-spacing: -1px; }
.csearch { display: flex; align-items: center; justify-content: space-between; height: 19px; padding: 4px 7px 0 2px; line-height: 14px; color: #9e9e9e; background: #fff; border-bottom: 1px solid #bdbdbd; flex: none; }
.csic { width: 11px; height: 11px; margin-top: -4px; }
.tree { position: relative; flex: 1; min-height: 0; padding-top: 5px; overflow: hidden; white-space: nowrap; }
.troot { display: flex; align-items: center; height: 23px; padding-left: 11px; }
.tri { width: 0; height: 0; margin-right: 7px; border-style: solid; border-width: 0 0 6px 6px; border-color: transparent transparent #444; }
.ti { display: flex; align-items: center; height: 24px; margin-left: 40px; letter-spacing: .07px; }
.ti span { display: block; width: 203px; height: 21px; padding-left: 3px; line-height: 21px; flex: none; }
.ti .sel { background: #afcbec; }
.thumb { position: absolute; width: 8px; background: #cfcfcf; border-radius: 4px; }
.thumb1 { left: 267px; top: 17px; height: 117px; }
.ptable { position: relative; height: 355px; overflow: hidden; border-bottom: 1px solid #bdbdbd; flex: none; }
.ptable table { width: 263px; border-collapse: collapse; table-layout: fixed; }
.cn { width: 22px; }
.ck { width: 101px; }
.ptable th, .ptable td { height: 21px; padding: 3px 0 0; line-height: 16px; border: 1px solid #d2d2d2; border-top: 0; border-left: 0; font-weight: normal; white-space: nowrap; overflow: hidden; }
.ptable tbody th { background: #f2f2f2; color: #444; font-size: 13px; }
.ptable thead th { background: #f2f2f2; color: #444; }
.ptable td { padding-left: 2px; }
.lk { color: #2b6fe6; }
.rb { display: inline-block; margin: 0 0 0 2px; font-size: 10px; line-height: 10px; vertical-align: 3px; -webkit-text-stroke: .2px #1d1d1d; }
.thumb2 { left: 267px; top: 15px; height: 212px; }
.pfoot { padding: 4px 5px; flex: 1; }
.parambtn { display: block; width: 80px; height: 24px; border: 1px solid #ccc; border-radius: 3px; background: #fff; color: #222; }

.split { width: 4px; flex: none; }
.grip { width: 4px; height: 98px; margin-top: 374px; background: #6f7479; }

.canvas { position: relative; width: 1138px; height: 844px; flex: none; overflow: hidden; }
.draw { display: block; }
.lbl text { fill: #f6f6f6; font: 19px Roboto, "Liberation Sans", sans-serif; letter-spacing: -.6px; text-anchor: middle; dominant-baseline: central; }
.axy { fill: #00e000; font: 13px "Liberation Sans", sans-serif; text-anchor: middle; dominant-baseline: central; }
.axx { fill: #f00; font: 13px "Liberation Sans", sans-serif; text-anchor: middle; dominant-baseline: central; }
.viewtools {
  position: absolute;
  top: 1px;
  right: 0;
  display: flex;
  flex-direction: column;
  align-items: center;
  width: 33px;
  height: 225px;
  padding-top: 9px;
  background: #9ea2a8;
  border: 1px solid #b5b8bc;
}
.vt { width: 24px; height: 23px; flex: none; }
.vplanet { height: 22px; }
.v3d { margin-top: 8px; }
.vwire { margin-top: 5px; }
.d1 { margin-top: 6px; }
.vsolid { margin-top: 6px; }
.d2 { margin-top: 7px; }
.vrot { margin-top: 9px; }
.d3 { margin-top: 5px; }
.vsep { width: 24px; height: 1px; margin-top: 5px; background: #6f757c; flex: none; }
.vgrid { margin-top: 5px; }
.t3d { fill: #20262e; font: 8px "Liberation Sans", sans-serif; }

/* right */
.right { display: flex; flex-direction: column; width: 185px; margin-left: 4px; flex: none; border-left: 1px solid #cfcfcf; }
.right .phead { background: #e0e0e2; }
.rtitle { height: 22px; padding: 2px 0 0 9px; line-height: 22px; color: #8a8a8a; background: #f1f1f1; border-bottom: 1px solid #d4d4d4; flex: none; }
.rtabs { display: flex; align-items: flex-end; gap: 3px; height: 28px; padding-left: 3px; background: #f6f6f6; flex: none; }
.rtab { width: 74px; height: 22px; line-height: 25px; text-align: center; color: #777; background: #e4e4e4; border-radius: 3px 3px 0 0; }
.rtab.on { width: 75px; height: 24px; line-height: 27px; color: #2a7de1; background: #fff; border: 1px solid #d8d8d8; border-bottom: 0; }
.ltable { height: 740px; margin: 4px 0 0 3px; overflow: hidden; border: 1px solid #d0d0d0; border-right: 0; flex: none; }
.lrow { display: flex; height: 21px; border-bottom: 1px solid #d8d8d8; white-space: nowrap; }
.lhead { background: #f1f1f1; color: #444; }
.lhead .lname { justify-content: center; padding: 2px 0 0; }
.lhead .lcheck { overflow: hidden; padding: 2px 0 0 7px; }
.lname { display: flex; align-items: center; width: 131px; height: 20px; border-right: 1px solid #d8d8d8; flex: none; }
.lcheck { display: flex; align-items: center; justify-content: flex-start; width: 62px; height: 20px; flex: none; padding-left: 24px; }
.l0 { padding: 1px 0 0 1px; }
.l0 .exp { margin-right: 7px; }
.l1 { padding: 1px 0 0 11px; }
.l2 { padding: 0 0 0 17px; }
.exp { position: relative; width: 12px; height: 12px; margin-right: 6px; border: 1px solid #8a8a8a; border-radius: 2px; background: #fff; flex: none; }
.exp::after { content: ""; position: absolute; left: 2px; top: 4px; width: 6px; height: 1px; background: #444; }
.br {
  width: 22px;
  height: 20px;
  margin-right: 1px;
  flex: none;
  background:
    linear-gradient(#ddd, #ddd) left top / 1px 100% no-repeat,
    linear-gradient(#ddd, #ddd) left 50% / 16px 1px no-repeat;
}
.br.last { background: linear-gradient(#ddd, #ddd) left top / 1px 50% no-repeat, linear-gradient(#ddd, #ddd) left 50% / 16px 1px no-repeat; }
.cb { position: relative; display: block; width: 14px; height: 14px; border: 1px solid #9a9a9a; border-radius: 3px; background: #fff; flex: none; }
.cb.on { border-color: #5b9df5; background: #5b9df5; }
.cb.on::after { content: ""; position: absolute; left: 3px; top: 2px; width: 7px; height: 4px; border-left: 2px solid #fff; border-bottom: 2px solid #fff; transform: rotate(-45deg); }
.cb.part { border-color: #8a8a8a; }
.cb.part::after { content: ""; position: absolute; left: 1px; top: 1px; width: 10px; height: 10px; border-radius: 2px; background: #8fc0fb; }
.rfoot { display: flex; justify-content: flex-end; padding-top: 6px; }
.rbtn { width: 4px; height: 26px; border: 1px solid #ccc; border-right: 0; border-radius: 3px 0 0 3px; background: #fff; }

/* status */
.status { display: flex; align-items: flex-start; height: 14px; overflow: hidden; background: #dcdde0; white-space: nowrap; }
.s { margin-top: 7px; line-height: 18px; color: #333; flex: none; }
.s1 { margin-left: 118px; }
.s2 { margin-left: 18px; }
.s3 { margin-left: 34px; }
.s4 { margin-left: 22px; }
.s5 { margin-left: 32px; }
.s6 { margin-left: 80px; }
.s7 { margin-left: 17px; }
.sb { display: flex; justify-content: center; flex: none; height: 24px; margin-top: 3px; padding-top: 4px; line-height: 18px; border: 1px solid #a8a8a8; background: #e8e8e8; color: #333; }
.sb svg { width: 14px; height: 14px; }
.b1 { width: 25px; margin-left: 58px; }
.b2 { width: 35px; margin-left: 4px; background: #fff; border-color: #2a78d8; justify-content: flex-start; padding-left: 3px; }
.b3 { width: 25px; margin-left: 6px; }
.b4 { width: 36px; margin-left: 6px; }
.b5 { width: 36px; margin-left: 4px; }
.b6 { width: 72px; margin-left: 3px; }
.b7 { width: 61px; margin-left: 4px; }
.s8 { margin-left: 6px; }
```
